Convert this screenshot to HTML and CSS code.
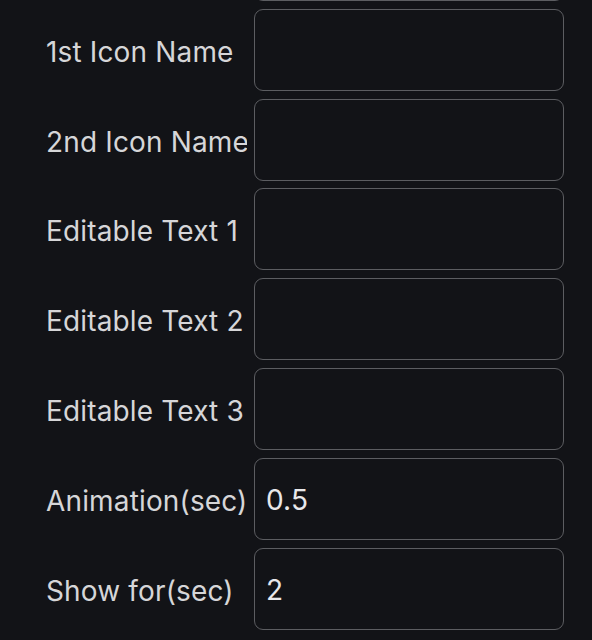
FILE: index.html
```html
<!DOCTYPE html>
<html>
<head>
<meta charset="utf-8">
<link rel="stylesheet" href="styles.css">
</head>
<body>
<div class="panel">
  <div class="list">
    <div class="row"><label class="label"></label><div class="field"></div></div>
    <div class="row"><label class="label">1st Icon Name</label><div class="field"></div></div>
    <div class="row"><label class="label">2nd Icon Name</label><div class="field"></div></div>
    <div class="row"><label class="label">Editable Text 1</label><div class="field"></div></div>
    <div class="row"><label class="label">Editable Text 2</label><div class="field"></div></div>
    <div class="row"><label class="label">Editable Text 3</label><div class="field"></div></div>
    <div class="row"><label class="label">Animation(sec)</label><div class="field">0.5</div></div>
    <div class="row"><label class="label">Show for(sec)</label><div class="field">2</div></div>
  </div>
</div>
</body>
</html>
```

FILE: styles.css
```css
html, body {
  margin: 0;
  padding: 0;
  background: #121317;
  height: 100%;
  overflow: hidden;
}
.panel {
  width: 592px;
  height: 640px;
  overflow: hidden;
  font-family: "Inter", "Noto Sans", sans-serif;
  font-size: 28px;
  letter-spacing: 0.15px;
  color: #d6d6d8;
}
.list {
  display: flex;
  flex-direction: column;
  gap: 7.8px;
  margin-top: -81px;
  padding: 0 28px 0 46px;
}
.row {
  display: flex;
  align-items: center;
  gap: 7px;
}
.label {
  width: 201px;
  flex: none;
  white-space: nowrap;
  overflow: hidden;
  padding-top: 4px;
  min-height: 30px;
}
.field {
  flex: 1;
  height: 82px;
  box-sizing: border-box;
  border: 1.5px solid #5c5d61;
  border-radius: 9px;
  display: flex;
  align-items: center;
  padding: 3px 0 0 11px;
  color: #e8e8ea;
}
```
